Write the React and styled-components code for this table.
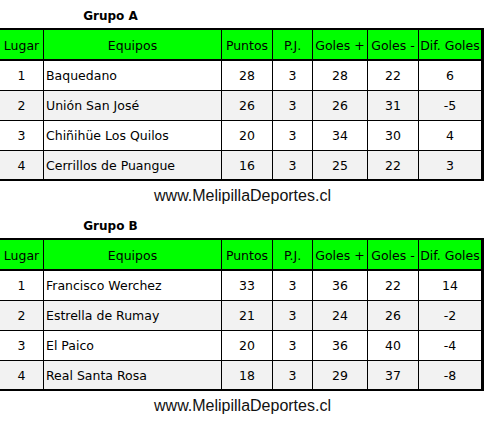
import React from "react";
import styled, { createGlobalStyle } from "styled-components";

const Global = createGlobalStyle`
  html, body { margin: 0; padding: 0; background: #fff; }
  body { font-family: "DejaVu Sans", Verdana, sans-serif; color: #000; }
`;

const Page = styled.div`
  width: 485px;
`;

const Section = styled.section`
  height: 210px;
`;

const Title = styled.div`
  width: 221px;
  height: 28px;
  padding-top: 9px;
  box-sizing: border-box;
  text-align: center;
  font-weight: bold;
  font-size: 12px;
  line-height: 14px;
`;

const Table = styled.table`
  width: 484px;
  table-layout: fixed;
  border-collapse: separate;
  border-spacing: 0;
  border-top: 2px solid #000;
  border-bottom: 2px solid #000;
  border-right: 3px solid #000;
  border-left: 0;
  font-size: 12.5px;
`;

const HeadCell = styled.th`
  background: #00ff00;
  font-weight: normal;
  text-align: center;
  white-space: nowrap;
  padding: 2px 0 0;
  height: 31px;
  box-sizing: border-box;
  border-bottom: 2px solid #000;
  border-right: ${(p) => (p.$end ? "0" : "1px solid #000")};
`;

const Row = styled.tr`
  background: ${(p) => (p.$alt ? "#f2f2f2" : "#fff")};
  height: ${(p) => (p.$last ? "28px" : "30px")};
`;

const Cell = styled.td`
  text-align: ${(p) => (p.$left ? "left" : "center")};
  padding: ${(p) => (p.$left ? "0 0 0 2px" : "0")};
  white-space: nowrap;
  border-right: ${(p) => (p.$end ? "0" : "1px solid #000")};
  border-bottom: ${(p) => (p.$last ? "0" : "1px solid #000")};
`;

const Footer = styled.div`
  height: 29px;
  padding-top: 6px;
  box-sizing: border-box;
  text-align: center;
  font-family: "Liberation Sans", Arial, sans-serif;
  font-size: 16px;
  line-height: 18px;
  color: #111;
`;

const widths = [44, 178, 51, 40, 55, 51, 62];
const heads = ["Lugar", "Equipos", "Puntos", "P.J.", "Goles +", "Goles -", "Dif. Goles"];

const grupos = [
  {
    nombre: "Grupo A",
    filas: [
      [1, "Baquedano", 28, 3, 28, 22, 6],
      [2, "Unión San José", 26, 3, 26, 31, -5],
      [3, "Chiñihüe Los Quilos", 20, 3, 34, 30, 4],
      [4, "Cerrillos de Puangue", 16, 3, 25, 22, 3],
    ],
  },
  {
    nombre: "Grupo B",
    filas: [
      [1, "Francisco Werchez", 33, 3, 36, 22, 14],
      [2, "Estrella de Rumay", 21, 3, 24, 26, -2],
      [3, "El Paico", 20, 3, 36, 40, -4],
      [4, "Real Santa Rosa", 18, 3, 29, 37, -8],
    ],
  },
];

function Tabla({ grupo }) {
  return (
    <Section>
      <Title>{grupo.nombre}</Title>
      <Table>
        <colgroup>
          {widths.map((w, i) => (
            <col key={i} style={{ width: w }} />
          ))}
        </colgroup>
        <thead>
          <tr>
            {heads.map((h, i) => (
              <HeadCell key={h} $end={i === heads.length - 1}>
                {h}
              </HeadCell>
            ))}
          </tr>
        </thead>
        <tbody>
          {grupo.filas.map((f, r) => {
            const last = r === grupo.filas.length - 1;
            return (
              <Row key={r} $alt={r % 2 === 1} $last={last}>
                {f.map((v, i) => (
                  <Cell key={i} $left={i === 1} $end={i === f.length - 1} $last={last}>
                    {v}
                  </Cell>
                ))}
              </Row>
            );
          })}
        </tbody>
      </Table>
      <Footer>www.MelipillaDeportes.cl</Footer>
    </Section>
  );
}

export default function App() {
  return (
    <Page>
      <Global />
      {grupos.map((g) => (
        <Tabla key={g.nombre} grupo={g} />
      ))}
    </Page>
  );
}
